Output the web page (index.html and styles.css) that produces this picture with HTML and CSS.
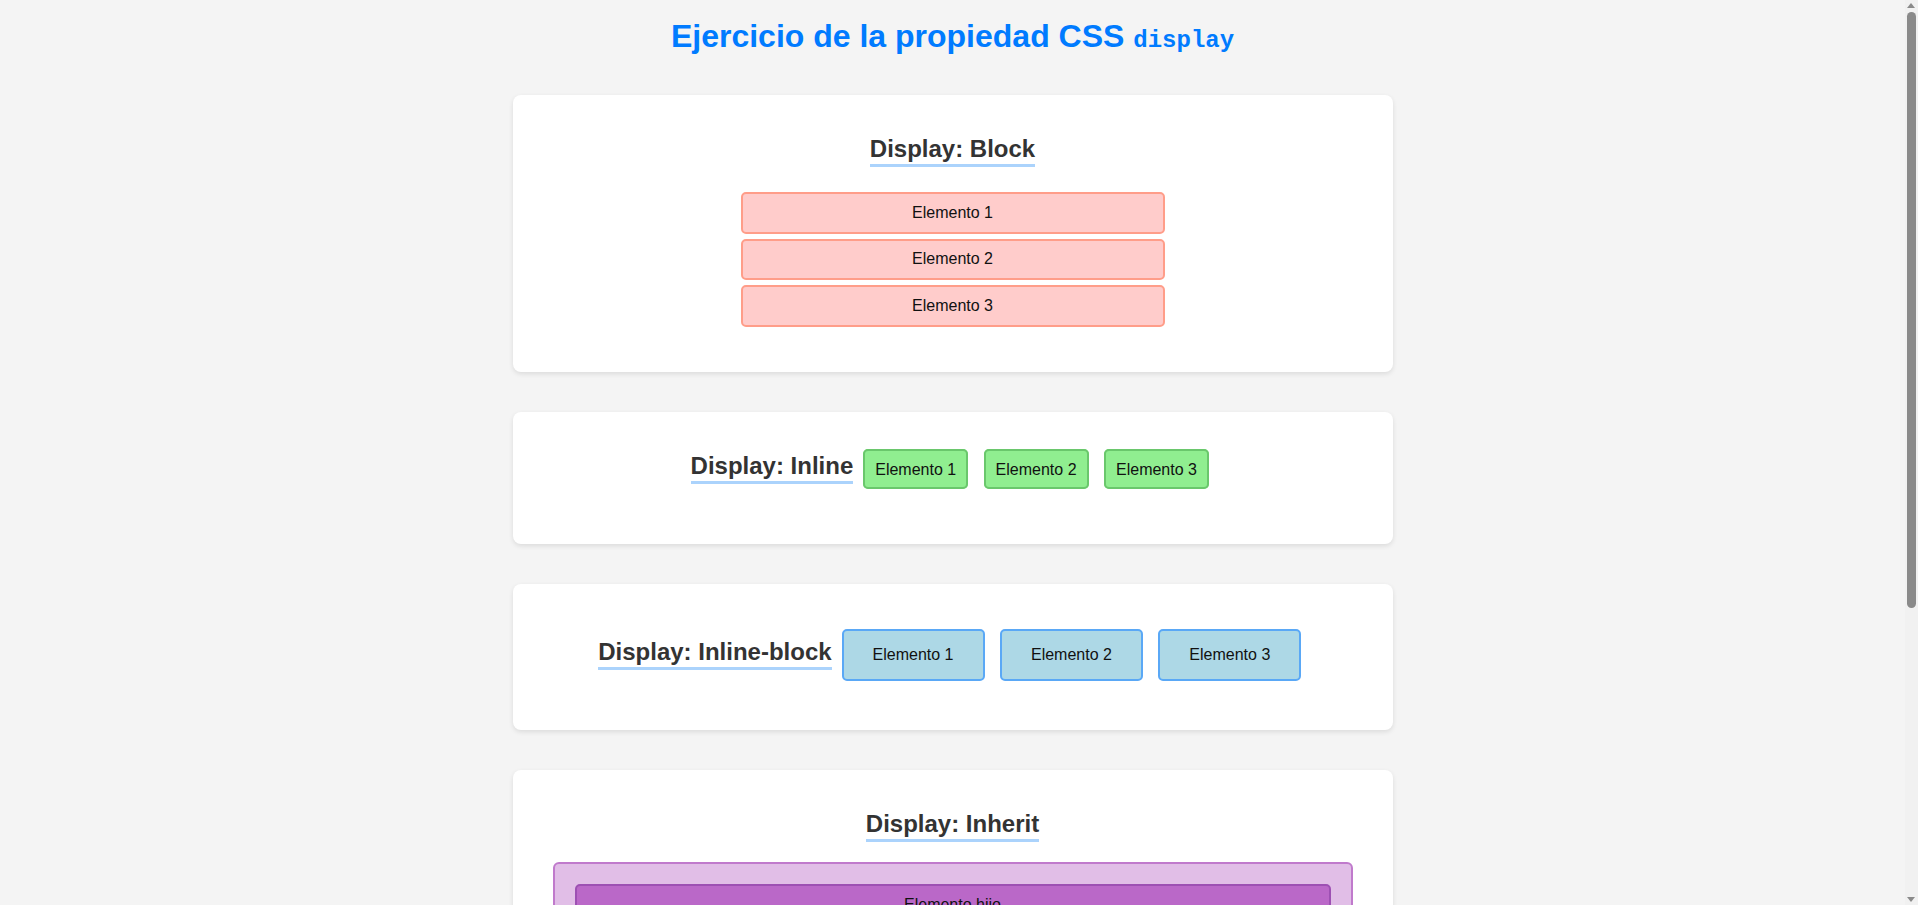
FILE: index.html
```html
<!DOCTYPE html>
<html lang="es">
<head>
<meta charset="utf-8">
<title>Ejercicio de la propiedad CSS display</title>
<link rel="stylesheet" href="styles.css">
</head>
<body>
<h1 class="page-title">Ejercicio de la propiedad CSS <code class="code">display</code></h1>

<section class="card">
  <h2 class="card-title">Display: Block</h2>
  <div class="block-item">Elemento 1</div>
  <div class="block-item">Elemento 2</div>
  <div class="block-item">Elemento 3</div>
</section>

<section class="card">
  <h2 class="card-title">Display: Inline</h2>
  <span class="inline-item">Elemento 1</span>
  <span class="inline-item">Elemento 2</span>
  <span class="inline-item">Elemento 3</span>
</section>

<section class="card card-tall">
  <h2 class="card-title">Display: Inline-block</h2>
  <div class="iblock-item">Elemento 1</div>
  <div class="iblock-item">Elemento 2</div>
  <div class="iblock-item">Elemento 3</div>
</section>

<section class="card">
  <h2 class="card-title">Display: Inherit</h2>
  <div class="parent-box">
    <div class="child-box">Elemento hijo</div>
  </div>
</section>

<div class="scrollbar" aria-hidden="true">
  <span class="scroll-arrow scroll-arrow-up"></span>
  <span class="scroll-thumb"></span>
  <span class="scroll-arrow scroll-arrow-down"></span>
</div>
</body>
</html>
```

FILE: styles.css
```css
html, body {
  margin: 0;
  padding: 0;
}

body {
  background: #f4f4f4;
  font-family: "Liberation Sans", Arial, sans-serif;
  font-size: 16px;
  color: #333;
  padding: 16px 13px 20px 0;
}

.page-title {
  margin: 0 0 39px;
  text-align: center;
  color: #007bff;
  font-size: 32px;
  font-weight: bold;
  line-height: 40px;
}

.code {
  font-family: "Liberation Mono", "DejaVu Sans Mono", monospace;
  font-size: 24px;
  line-height: 1;
}

.card {
  box-sizing: border-box;
  width: 880px;
  margin: 0 auto 40px;
  padding: 20px 20px 40px;
  background: #fff;
  border-radius: 8px;
  box-shadow: 0 2px 5px rgba(0, 0, 0, 0.1);
  text-align: center;
}

.card-tall {
  padding-top: 34px;
}

.card-title {
  display: inline-block;
  margin: 19.92px 0;
  padding-bottom: 1px;
  font-size: 24px;
  font-weight: bold;
  color: #333;
  border-bottom: 3px solid #abd3fc;
}

.block-item {
  width: 400px;
  margin: 5px auto;
  padding: 9.9px 10px;
  background: #ffcccb;
  border: 2px solid #ff9d89;
  border-radius: 5px;
  color: #111;
}

.inline-item {
  display: inline;
  margin: 0 5.5px;
  padding: 9.5px 10px;
  background: #90ee90;
  border: 2px solid #6ac76c;
  border-radius: 5px;
  color: #111;
}

.iblock-item {
  display: inline-block;
  margin: 0 5.5px;
  padding: 15.3px 29px;
  background: #add8e6;
  border: 2px solid #5aa8f6;
  border-radius: 5px;
  color: #111;
}

.parent-box {
  margin: 0 20px 20px;
  padding: 20px;
  background: #e1bee7;
  border: 2px solid #c07acc;
  border-radius: 6px;
}

.child-box {
  padding: 10px;
  background: #ba68c8;
  border: 2px solid #9d50b3;
  border-radius: 5px;
  color: #111;
}

/* imitation of the browser's vertical scrollbar */
.scrollbar {
  position: fixed;
  top: 0;
  right: 0;
  bottom: 0;
  width: 13px;
  background: #f1f1f1;
}

.scroll-thumb {
  position: absolute;
  top: 12px;
  left: 2px;
  width: 9px;
  height: 596px;
  border-radius: 5px;
  background: #8a8a8a;
}

.scroll-arrow {
  position: absolute;
  left: 2px;
  width: 0;
  height: 0;
  border-left: 4.5px solid transparent;
  border-right: 4.5px solid transparent;
}

.scroll-arrow-up {
  top: 3px;
  border-bottom: 5px solid #8a8a8a;
}

.scroll-arrow-down {
  bottom: 3px;
  border-top: 5px solid #8a8a8a;
}
```
